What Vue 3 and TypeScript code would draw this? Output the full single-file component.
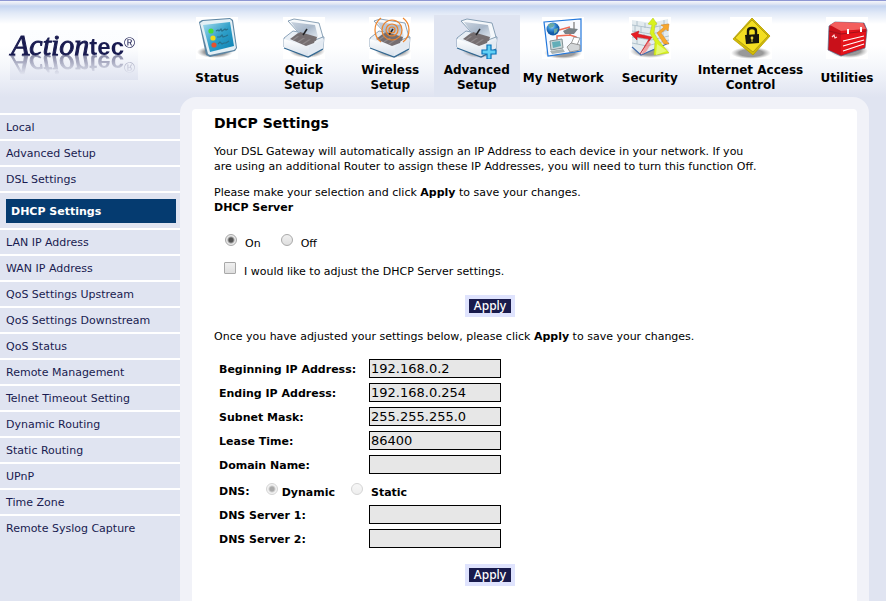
<script setup lang="ts">
import { ref } from 'vue'

interface NavItem {
  id: string
  label: string
  active?: boolean
}

interface Field {
  id: string
  label: string
  value: string
}

const navItems: NavItem[] = [
  { id: 'status', label: 'Status' },
  { id: 'quick', label: 'Quick\nSetup' },
  { id: 'wireless', label: 'Wireless\nSetup' },
  { id: 'advanced', label: 'Advanced\nSetup', active: true },
  { id: 'network', label: 'My Network' },
  { id: 'security', label: 'Security' },
  { id: 'access', label: 'Internet Access\nControl' },
  { id: 'utilities', label: 'Utilities' },
]

const sideItems: string[] = [
  'Local',
  'Advanced Setup',
  'DSL Settings',
  'DHCP Settings',
  'LAN IP Address',
  'WAN IP Address',
  'QoS Settings Upstream',
  'QoS Settings Downstream',
  'QoS Status',
  'Remote Management',
  'Telnet Timeout Setting',
  'Dynamic Routing',
  'Static Routing',
  'UPnP',
  'Time Zone',
  'Remote Syslog Capture',
]
const currentSide = 'DHCP Settings'

const addressFields = ref<Field[]>([
  { id: 'begin-ip', label: 'Beginning IP Address:', value: '192.168.0.2' },
  { id: 'end-ip', label: 'Ending IP Address:', value: '192.168.0.254' },
  { id: 'subnet', label: 'Subnet Mask:', value: '255.255.255.0' },
  { id: 'lease', label: 'Lease Time:', value: '86400' },
  { id: 'domain', label: 'Domain Name:', value: '' },
])
const dnsFields = ref<Field[]>([
  { id: 'dns1', label: 'DNS Server 1:', value: '' },
  { id: 'dns2', label: 'DNS Server 2:', value: '' },
])

const server = ref('on')
const adjust = ref(false)
const dns = ref('dynamic')
</script>

<template>
  <div class="page">
    <header class="header">
      <a class="logo" href="#"><span class="logo-text"><span class="logo-script">Action</span><span class="logo-sans">tec</span><span class="logo-mark">®</span></span></a>
      <nav class="nav">
        <a v-for="item in navItems" :key="item.id" href="#" class="nav-item" :class="{ active: item.active }">
          <svg class="icon" :class="{ plain: item.active }" viewBox="0 0 42 42" aria-hidden="true">
            <defs>
              <linearGradient :id="item.id + '-blue'" x1="0" y1="0" x2="1" y2="1">
                <stop offset="0" stop-color="#a5dcef" /><stop offset=".5" stop-color="#2f9fc8" /><stop offset="1" stop-color="#087fb2" />
              </linearGradient>
              <linearGradient :id="item.id + '-lid'" x1="0" y1="0" x2="1" y2="1">
                <stop offset="0" stop-color="#c9d3df" /><stop offset=".5" stop-color="#a9b8ca" /><stop offset="1" stop-color="#e6edf4" />
              </linearGradient>
              <linearGradient :id="item.id + '-side'" x1="0" y1="0" x2="0" y2="1">
                <stop offset="0" stop-color="#ffffff" /><stop offset="1" stop-color="#d5dfea" />
              </linearGradient>
              <radialGradient :id="item.id + '-shade'">
                <stop offset=".6" stop-color="#777" stop-opacity=".75" /><stop offset="1" stop-color="#999" stop-opacity="0" />
              </radialGradient>
              <radialGradient :id="item.id + '-globe'" cx=".4" cy=".3">
                <stop offset="0" stop-color="#b8e1fb" /><stop offset=".5" stop-color="#3c94dc" /><stop offset="1" stop-color="#125ba8" />
              </radialGradient>
            </defs>

            <template v-if="item.id === 'status'">
              <ellipse cx="19" cy="35" rx="18" ry="6" :fill="`url(#${item.id}-shade)`" />
              <path d="M3 5 L6 3 L34 1 L37 3 L41 31 L39 34 L14 40 L10 38 Z" fill="#5b84a2" />
              <path d="M4 6 L7 4 L34 2 L36 4 L40 31 L38 33 L14 38 L12 37 Z" fill="#e3eff5" />
              <path d="M7 8 L34 5 L38 29 L14 35 Z" :fill="`url(#${item.id}-blue)`" />
              <circle cx="15" cy="14" r="2.6" fill="#45dd3b" /><circle cx="17" cy="21" r="2.6" fill="#f0dc18" /><circle cx="18" cy="28" r="2.6" fill="#e5512e" />
              <path d="M20 14 l2-1 1 1 2-2 1 2 3-2 1 1 2-1 M21 20 l3 0 2-2 1 2 3-1 2-1 M22 27 l2-2 2 2 2-1 2 0 3-2" fill="none" stroke="#27718e" stroke-width="1.2" />
            </template>

            <template v-else-if="item.id === 'quick' || item.id === 'wireless' || item.id === 'advanced'">
              <ellipse cx="24" cy="34" rx="18" ry="7" :fill="`url(#${item.id}-shade)`" />
              <path d="M1 21 L10 14 L41 20 L40 32 L26 40 L1 30 Z" fill="#e9eff5" stroke="#60809d" stroke-width=".7" />
              <path d="M1 22 L26 30 L25 40 L1 31 Z" :fill="`url(#${item.id}-side)`" />
              <path d="M26 30 L41 22 L40 32 L25 40 Z" fill="#e3eaf2" />
              <path d="M1 31 L25 40 L40 32" fill="none" stroke="#316791" stroke-width="1.2" />
              <path d="M7 22 L15 16 L33 21 L31 26 L23 29 Z" fill="#756e70" />
              <path d="M10 23 L17 18 M15 25 L24 19 M20 27 L29 21" stroke="#8e888a" stroke-width="1.5" />
              <path d="M5 4 L11 2 L36 6 L40 20 L32 23 L15 15 Z" fill="#f5f8fb" stroke="#6f8ba4" stroke-width=".8" />
              <path d="M8 5 L32 8 L35 20 L32 22 L15 15 Z" :fill="`url(#${item.id}-lid)`" />
              <path d="M14 19 L17 15 L34 20 L33 24 Z" fill="#756e70" />
              <path d="M20 18 L24 12" stroke="#202226" stroke-width="1.5" />
              <g v-if="item.id === 'wireless'" fill="none" stroke="#ed842c" stroke-width="1.2">
                <circle cx="23" cy="13" r="3" /><circle cx="23" cy="13" r="6" /><circle cx="23" cy="13" r="10" />
                <path d="M12 1 A15 15 0 0 0 12 25 M34 1 A15 15 0 0 1 34 25" />
              </g>
              <path v-if="item.id === 'advanced'" d="M31 28h4v5h5v4h-5v5h-4v-5h-5v-4h5z" fill="#62d0f5" stroke="#0872ba" stroke-width="1.2" />
            </template>

            <template v-else-if="item.id === 'network'">
              <ellipse cx="21" cy="36" rx="19" ry="6" :fill="`url(#${item.id}-shade)`" />
              <path d="M2 5 L39 2 L39 34 L6 39 Z" fill="#f7faff" stroke="#2378dc" stroke-width="1.2" />
              <path d="M17 13 L28 10 M28 14 V18 L15 19 V24 M28 18 L34 20 V25" fill="none" stroke="#f06c56" stroke-width="1.5" />
              <circle cx="11" cy="12" r="6.5" :fill="`url(#${item.id}-globe)`" />
              <path d="M6 8 l3-2 4 1-2 3-3 1z M12 12 l4-1-1 4-3 2z" fill="#6ba9a2" />
              <path d="M21 14 L27 11 L36 12 L32 17 L23 17Z" fill="#778187" /><path d="M32 12V5" stroke="#777" stroke-width="1.2" />
              <path d="M8 24 L20 22 L21 31 L9 33Z" fill="#ccd8da" stroke="#839195" /><path d="M10 25 L18 24 L19 29 L11 31Z" fill="#62aeb8" />
              <path d="M8 34 L21 32 L23 35 L10 37Z" fill="#aab4b5" />
              <path d="M29 27 L32 20 L38 21 L35 28Z" fill="#fff" stroke="#777" stroke-width=".7" />
              <path d="M25 30 L29 26 L38 28 L38 33 L28 35Z" fill="#d3d6d8" stroke="#858585" stroke-width=".8" />
            </template>

            <template v-else-if="item.id === 'security'">
              <ellipse cx="21" cy="34" rx="20" ry="7" :fill="`url(#${item.id}-shade)`" />
              <path d="M3 3 L22 6 L39 2 L40 25 L12 38 L3 30 Z" fill="#e3ebef" />
              <path d="M3 8L22 11L39 7 M3 14L22 17L40 13 M3 20L22 23L40 19 M3 26L18 29L40 23 M8 4V9 M16 6V11 M27 5V10 M35 3V8 M6 9V15 M12 10V16 M31 9V15 M8 21V27 M15 17V22 M34 14V20 M28 22V28" fill="none" stroke="#a4b8c4" stroke-width=".8" />
              <path d="M3 30 L12 38 L40 26" fill="none" stroke="#446eae" stroke-width="1.2" />
              <path d="M11 37 L20 22 L8 20 L8 23 L2 17 L10 14 L9 17 L23 20 Z" fill="#e81e24" stroke="#b81820" stroke-width=".5" />
              <path d="M12 38L19 24L22 27L17 35Z" fill="#f58380" opacity=".7" />
              <path d="M25 38 L26 25 L21 16 L23 8 L19 7 L24 1 L28 7 L26 8 L25 16 L30 24 L40 36Z" fill="#d9f21e" stroke="#b5c819" stroke-width=".5" />
              <path d="M27 38L28 27L38 34Z" fill="#e8fa8b" opacity=".8" />
              <path d="M35 27 L28 16 L35 10 L32 8 L40 7 L39 14 L37 12 L32 16 L40 27Z" fill="#f7a72c" stroke="#d8841c" stroke-width=".5" />
            </template>

            <template v-else-if="item.id === 'access'">
              <ellipse cx="21" cy="36" rx="20" ry="6" :fill="`url(#${item.id}-shade)`" />
              <path d="M22 1 L40 19 L23 38 L3 22Z" fill="#d4bd05" stroke="#b59d00" stroke-width=".8" />
              <path d="M22 3 L38 19 L23 35 L5 21Z" fill="#f3de22" stroke="#a79513" stroke-width=".8" />
              <path d="M18 18 V14 C18 10 26 10 26 14 V18" fill="none" stroke="#17170c" stroke-width="2.4" />
              <path d="M15 18 L29 17 L29 26 L16 27Z" fill="#17170c" /><circle cx="22" cy="21" r="1.4" fill="#e8d43d" /><path d="M22 21V25" stroke="#e8d43d" />
            </template>

            <template v-else>
              <ellipse cx="23" cy="34" rx="19" ry="7" :fill="`url(#${item.id}-shade)`" />
              <path d="M3 9 L9 5 L38 6 L41 13 L39 31 L15 39 L2 33 Z" fill="#c9101a" stroke="#547394" stroke-width=".7" />
              <path d="M4 8 L9 5 L37 6 L40 12 L15 14Z" fill="#f35e5d" />
              <path d="M15 14 L40 13 L39 30 L15 38Z" fill="#e4131b" />
              <path d="M3 14 L15 17 M15 17 L40 14" stroke="#a3111a" stroke-width="1.2" />
              <path d="M17 24 L38 19 M17 29 L38 23 M17 34 L38 27" stroke="#fff" stroke-width="1.2" />
              <path d="M22 12V17 M35 10V15" stroke="#fff" stroke-width="2" />
              <path d="M6 20 l2-2 1 3 2-1" fill="none" stroke="#ffd6d6" stroke-width="1.2" />
            </template>
          </svg>
          <span class="nav-label">{{ item.label }}</span>
        </a>
      </nav>
    </header>

    <div class="body">
      <aside class="sidebar">
        <ul>
          <li v-for="name in sideItems" :key="name" :class="{ current: name === currentSide }">
            <a href="#">{{ name }}</a>
          </li>
        </ul>
      </aside>

      <main class="panel">
        <div class="sheet">
          <form class="content" @submit.prevent>
            <h1>DHCP Settings</h1>
            <p class="intro">Your DSL Gateway will automatically assign an IP Address to each device in your network. If you are using an additional Router to assign these IP Addresses, you will need to turn this function Off.</p>
            <p>Please make your selection and click <b>Apply</b> to save your changes.</p>
            <h2 id="server-title">DHCP Server</h2>

            <div class="server" role="radiogroup" aria-labelledby="server-title">
              <label class="choice"><input v-model="server" type="radio" name="server" value="on"><span>On</span></label>
              <label class="choice"><input v-model="server" type="radio" name="server" value="off"><span>Off</span></label>
            </div>
            <label class="choice adjust"><input v-model="adjust" type="checkbox"><span>I would like to adjust the DHCP Server settings.</span></label>

            <button type="submit" class="apply">Apply</button>

            <p class="once">Once you have adjusted your settings below, please click <b>Apply</b> to save your changes.</p>

            <div class="fields">
              <div v-for="field in addressFields" :key="field.id" class="field">
                <label :for="field.id">{{ field.label }}</label>
                <input :id="field.id" v-model="field.value" type="text" disabled>
              </div>
              <div class="dns" role="radiogroup" aria-labelledby="dns-title">
                <span id="dns-title">DNS:</span>
                <label class="choice"><input v-model="dns" type="radio" name="dns" value="dynamic" disabled><span>Dynamic</span></label>
                <label class="choice"><input v-model="dns" type="radio" name="dns" value="static" disabled><span>Static</span></label>
              </div>
              <div v-for="field in dnsFields" :key="field.id" class="field">
                <label :for="field.id">{{ field.label }}</label>
                <input :id="field.id" v-model="field.value" type="text" disabled>
              </div>
            </div>

            <button type="submit" class="apply">Apply</button>
          </form>
        </div>
      </main>
    </div>
  </div>
</template>

<style>
body {
  background: #e0e4f1;
}
</style>

<style scoped>
* {
  box-sizing: border-box;
}
.page {
  display: flex;
  flex-direction: column;
  min-height: 100vh;
  color: #000;
  font: 11px/15px Verdana, "DejaVu Sans", sans-serif;
}
a {
  color: inherit;
  text-decoration: none;
}
h1, h2, p, ul {
  margin: 0;
  padding: 0;
}
.header {
  display: flex;
  height: 97px;
  border-top: 1px solid #8e97d3;
  background: linear-gradient(#f4f6fb 0, #dfe5f3 3px, #c5d5f1 5px, #e1e9f7 12px, #fff 23px, #fff 45px, #f5f7fb 65px, #e0e4f1 96px);
}
.logo {
  flex: none;
  width: 128px;
  height: 50px;
  margin: 29px 36px 0 10px;
  background: linear-gradient(#fcfdff, #fbfcfe 40%, #dfe3f0);
  color: #191b50;
}
.logo-text {
  display: flex;
  align-items: baseline;
  height: 25px;
  padding-left: 1px;
  line-height: 30px;
  -webkit-box-reflect: below 0 linear-gradient(transparent 20%, rgba(0, 0, 0, .5));
}
.logo-script {
  font-family: "Liberation Serif", serif;
  font-size: 30px;
  font-style: italic;
  -webkit-text-stroke: 1px #191b50;
}
.logo-sans {
  font-family: "Liberation Sans", sans-serif;
  font-size: 24px;
  font-weight: bold;
}
.logo-mark {
  align-self: flex-start;
  font: 15px/26px "Liberation Sans", sans-serif;
}
.nav {
  display: grid;
  flex: 1;
  grid-template-columns: repeat(6, 173fr) 230fr 156fr;
  padding-top: 14px;
}
.nav-item {
  display: flex;
  flex-direction: column;
  align-items: center;
  padding-top: 2px;
  font-size: 12px;
  font-weight: bold;
  text-align: center;
}
.nav-item.active {
  background: #dfe4f1;
}
.icon {
  flex: none;
  width: 42px;
  height: 42px;
  background: #fff;
}
.icon.plain {
  background: none;
}
.nav-label {
  display: flex;
  align-items: center;
  height: 38px;
  white-space: pre-line;
}
.body {
  display: flex;
  flex: 1;
}
.sidebar {
  flex: none;
  width: 180px;
  padding-top: 16px;
  color: #191b50;
}
.sidebar ul {
  list-style: none;
}
.sidebar li {
  border-top: 2px solid #fff;
}
.sidebar a {
  display: block;
  padding: 2px 6px 0;
  line-height: 22px;
}
.sidebar .current {
  padding: 6px 4px 5px 6px;
}
.sidebar .current a {
  padding: 2px 5px 0;
  background: #053b70;
  color: #fff;
  font-weight: bold;
}
.panel {
  display: flex;
  flex: 1;
  margin-right: 17px;
  padding: 12px 12px 0;
  border-radius: 16px 16px 0 0;
  background: #f1f2f8;
}
.sheet {
  flex: 1;
  padding: 6px 22px 15px;
  border-radius: 4px 4px 0 0;
  background: #fff;
}
.content {
  display: flex;
  flex-direction: column;
  max-width: 552px;
}
h1 {
  font-size: 14px;
  line-height: 16px;
}
h2 {
  font-size: 11px;
  line-height: 15px;
}
.intro {
  margin: 13px 0 11px;
  padding-right: 4px;
}
.server {
  display: flex;
  gap: 20px;
  margin: 17px 0 9px 11px;
}
.choice {
  display: flex;
  gap: 8px;
  padding-top: 2px;
}
.choice input {
  flex: none;
  width: 12px;
  height: 12px;
  margin: 0;
  appearance: none;
  border: 1px solid #a9a9a9;
  border-radius: 1px;
  background: linear-gradient(#f0f0f0, #dedede);
}
.choice input[type="radio"] {
  border-radius: 50%;
}
.choice input[type="radio"]:checked {
  background: radial-gradient(circle, #555 0, #555 2px, #e7e7e7 4px);
}
.choice input:disabled {
  opacity: .5;
}
.choice span {
  padding-top: 2px;
}
.adjust {
  margin-left: 10px;
}
.apply {
  align-self: center;
  margin: 0;
  padding: 0 5px;
  border: 4px solid #dfe3fd;
  background: #191b4c;
  color: #fff;
  font: 500 12px/14px "Noto Sans", sans-serif;
}
.once {
  margin: 12px 0;
}
.adjust + .apply {
  margin-top: 16px;
}
.fields {
  margin: 0 0 14px 5px;
  font-weight: bold;
}
.field {
  display: grid;
  grid-template-columns: 150px 132px;
  align-items: center;
  height: 24px;
}
.field label {
  padding-top: 2px;
}
.field input {
  width: 100%;
  height: 19px;
  padding: 0 1px;
  border: 1px solid #000;
  border-radius: 0;
  background: #e7e7e7;
  color: #000;
  font: 13px/17px Verdana, "DejaVu Sans", sans-serif;
}
.dns {
  display: flex;
  align-items: center;
  gap: 16px;
  height: 26px;
  padding-top: 4px;
}
.dns .choice {
  gap: 4px;
  padding: 0;
}
.dns .choice:last-child {
  gap: 8px;
}
</style>
